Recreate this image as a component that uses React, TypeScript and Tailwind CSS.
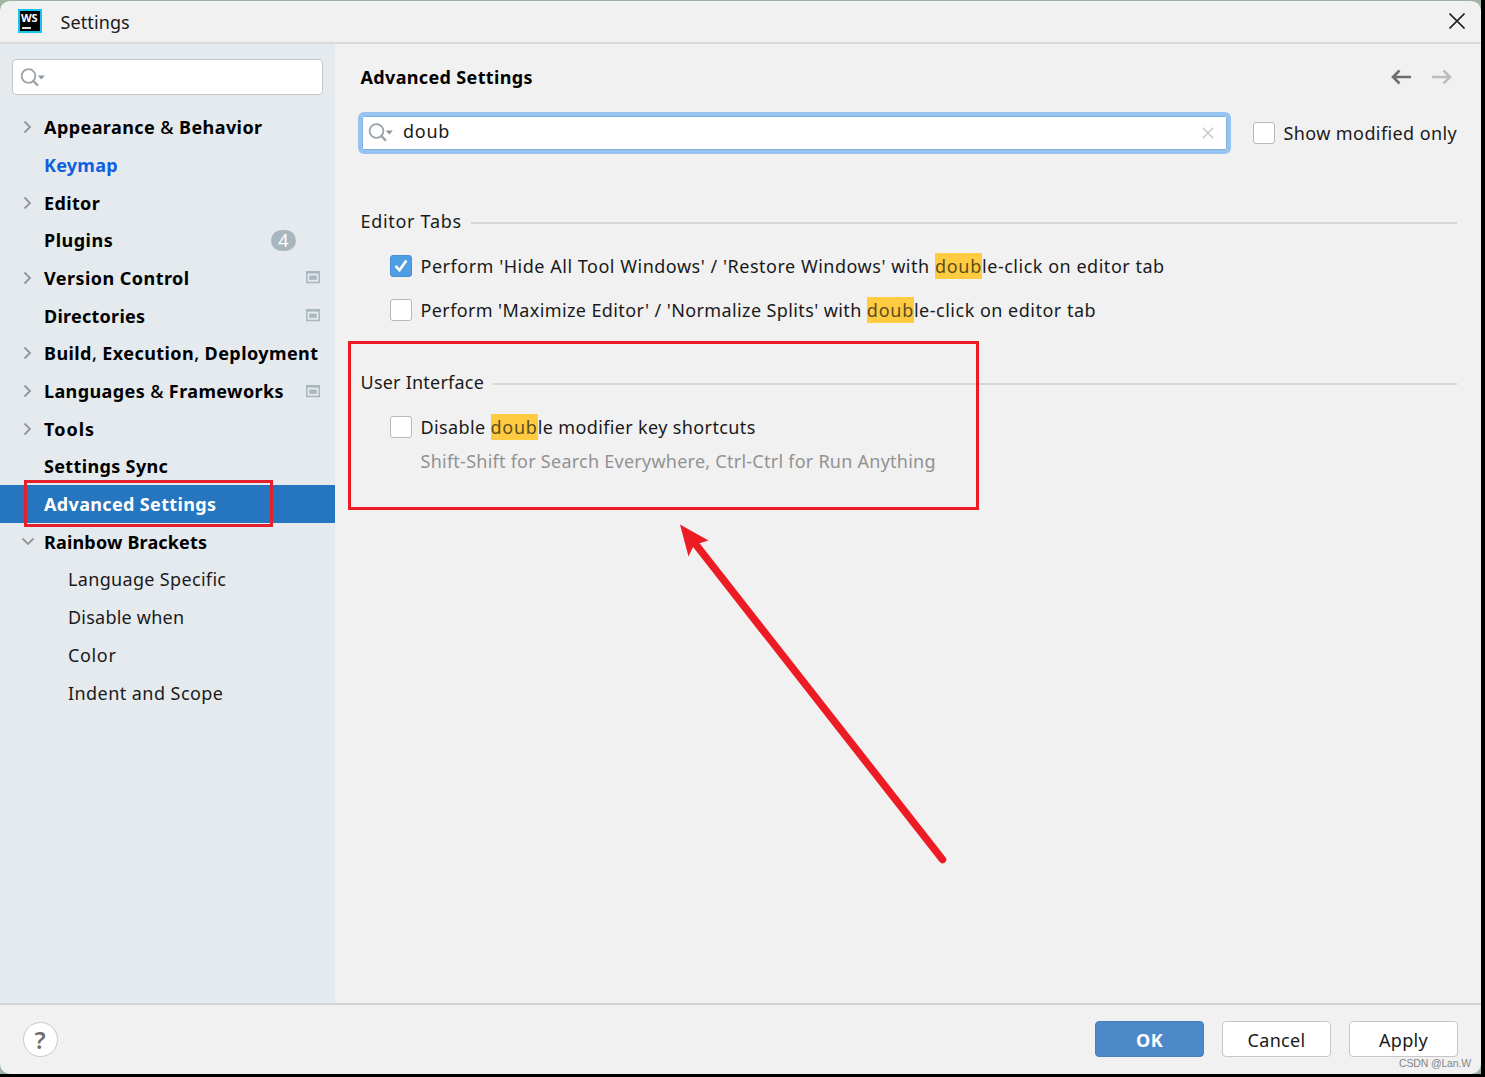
import { ReactNode } from "react";
import clsx from "clsx";

interface TreeItem {
  label: string;
  tracking: string;
  arrow?: "right" | "down";
  badge?: string;
  project?: boolean;
  link?: boolean;
  selected?: boolean;
  child?: boolean;
}

const items: TreeItem[] = [
  { label: "Appearance & Behavior", tracking: "tracking-[0.42px]", arrow: "right" },
  { label: "Keymap", tracking: "tracking-[0.25px]", link: true },
  { label: "Editor", tracking: "tracking-[0.35px]", arrow: "right" },
  { label: "Plugins", tracking: "tracking-[0.5px]", badge: "4" },
  { label: "Version Control", tracking: "tracking-[0.45px]", arrow: "right", project: true },
  { label: "Directories", tracking: "tracking-[0.25px]", project: true },
  { label: "Build, Execution, Deployment", tracking: "tracking-[0.42px]", arrow: "right" },
  { label: "Languages & Frameworks", tracking: "tracking-[0.39px]", arrow: "right", project: true },
  { label: "Tools", tracking: "tracking-[1px]", arrow: "right" },
  { label: "Settings Sync", tracking: "tracking-[0.35px]" },
  { label: "Advanced Settings", tracking: "tracking-[0.35px]", selected: true },
  { label: "Rainbow Brackets", tracking: "tracking-[0.17px]", arrow: "down" },
  { label: "Language Specific", tracking: "tracking-[0.33px]", child: true },
  { label: "Disable when", tracking: "tracking-[0.22px]", child: true },
  { label: "Color", tracking: "tracking-[0.65px]", child: true },
  { label: "Indent and Scope", tracking: "tracking-[0.44px]", child: true },
];

const Chevron = ({ direction }: { direction: "right" | "down" }) => (
  <svg
    viewBox="0 0 14 14"
    className={clsx("size-3.5", direction === "down" && "rotate-90")}
    fill="none"
    stroke="#929598"
    strokeWidth="1.8"
  >
    <path d="M3.5 1.5L9 7l-5.5 5.5" />
  </svg>
);

const SearchIcon = () => (
  <svg width="25" height="19" viewBox="0 0 25 19" fill="none" className="shrink-0">
    <circle cx="8.5" cy="8" r="6.9" stroke="#9aa3a9" strokeWidth="1.8" />
    <path d="M12.6 12.4l5.4 5.2" stroke="#9aa3a9" strokeWidth="2.3" />
    <path d="M17.8 7.5h7l-3.5 4z" fill="#8b959b" />
  </svg>
);

const ProjectIcon = () => (
  <svg width="14" height="13" viewBox="0 0 14 13" fill="none">
    <path d="M.8 1h12.4v10.6H.8z" stroke="#a9b6be" strokeWidth="1.5" />
    <path d="M0 0h14v2.6H0z" fill="#a9b6be" />
    <path d="M3.2 4.6h7.6v4.2H3.2z" fill="#a9b6be" />
  </svg>
);

const TreeRow = ({ item }: { item: TreeItem }) => (
  <div
    className={clsx(
      "flex h-[37.7px] items-center pl-[21px] pr-[15px]",
      item.selected && "bg-[#2675bf] text-white",
      item.link && "text-[#0f5fe0]",
      !item.selected && !item.link && "text-black"
    )}
  >
    <div className="w-[23px] shrink-0">{item.arrow && <Chevron direction={item.arrow} />}</div>
    <div
      className={clsx(
        "flex-1 whitespace-nowrap",
        item.child ? "pl-6 text-[#1a1a1a]" : "font-bold",
        item.tracking
      )}
    >
      {item.label.split(/([&,])/).map((part, index) =>
        /^[&,]$/.test(part) ? (
          <span key={index} className="font-medium">
            {part}
          </span>
        ) : (
          part
        )
      )}
    </div>
    {item.badge && (
      <div className="mr-[24px] flex h-[21px] w-[25px] items-center justify-center rounded-full bg-[#a9b6be] text-white">
        {item.badge}
      </div>
    )}
    {item.project && <ProjectIcon />}
  </div>
);

const Checkbox = ({ checked }: { checked?: boolean }) =>
  checked ? (
    <div className="flex size-[22px] shrink-0 items-center justify-center rounded-[3px] border border-[#4a90d6] bg-[#4f9ee3]">
      <svg width="16" height="16" viewBox="0 0 16 16" fill="none" stroke="#fff" strokeWidth="2.6">
        <path d="M2.5 8l4 4.2L13.4 2.5" />
      </svg>
    </div>
  ) : (
    <div className="size-[22px] shrink-0 rounded-[3px] border-[1.5px] border-[#b8b8b8] bg-white" />
  );

const Mark = () => (
  <span className="inline-block h-[26px] bg-[#ffcc41] leading-[26px] tracking-[0.75px] text-[#5c4d1f]">doub</span>
);

const SectionTitle = ({ tracking, children }: { tracking: string; children: ReactNode }) => (
  <div className="flex h-6 items-center gap-[9px]">
    <span className={clsx("whitespace-nowrap", tracking)}>{children}</span>
    <div className="mt-[3px] h-[2px] flex-1 bg-[#d6d6d6]" />
  </div>
);

interface OptionProps {
  checked?: boolean;
  tracking: string;
  children: ReactNode;
}

const Option = ({ checked, tracking, children }: OptionProps) => (
  <div className="flex h-[26px] items-center gap-[9px] pl-[29px]">
    <Checkbox checked={checked} />
    <div className={clsx("whitespace-nowrap", tracking)}>{children}</div>
  </div>
);

const Button = ({ primary, children }: { primary?: boolean; children: ReactNode }) => (
  <button
    className={clsx(
      "h-9 w-[109px] rounded-[4px] border-[1.5px] pt-px tracking-[0.3px]",
      primary ? "border-[#4480bf] bg-[#4d89c9] font-bold text-white" : "border-[#c6c6c6] bg-white"
    )}
  >
    {children}
  </button>
);

const Sidebar = () => (
  <div className="w-[335px] shrink-0 bg-[#e5eaee] pt-[15px]">
    <div className="ml-3 flex h-9 w-[311px] items-center rounded-[4px] border-[1.5px] border-[#c4c6c8] bg-white pl-[7px]">
      <SearchIcon />
    </div>
    <div className="pt-[13.4px]">
      {items.map((item) => (
        <TreeRow key={item.label} item={item} />
      ))}
    </div>
  </div>
);

const Content = () => (
  <div className="flex-1 pl-[25.5px] pr-[25px]">
    <div className="flex h-[66px] items-center justify-between">
      <h1 className="whitespace-nowrap font-bold tracking-[0.35px] text-black">Advanced Settings</h1>
      <div className="mr-[5.5px] flex gap-[21px]">
        {["#6e6e6e", "#bdbdbd"].map((color, index) => (
          <svg
            key={color}
            width="20"
            height="16"
            viewBox="0 0 20 16"
            fill="none"
            stroke={color}
            strokeWidth="2.6"
            className={clsx(index === 1 && "-scale-x-100")}
          >
            <path d="M20 8H2M8.5 1.5L2 8l6.5 6.5" />
          </svg>
        ))}
      </div>
    </div>
    <div className="-ml-[2.5px] flex h-[46px] items-center">
      <div className="-mt-px flex h-[42px] w-[873px] shrink-0 items-center rounded-[6px] border-4 border-[#97c3f0] bg-white pl-[6px] pr-[13px] ring-1 ring-inset ring-[#7fb0e4]">
        <SearchIcon />
        <span className="-mt-[3px] ml-[10px] flex-1 tracking-[0.75px]">doub</span>
        <svg width="12" height="12" viewBox="0 0 12 12" stroke="#c3c8cb" strokeWidth="1.5">
          <path d="M.7.7l10.6 10.6M11.3.7L.7 11.3" />
        </svg>
      </div>
      <div className="ml-[22px] flex items-center gap-[8.5px]">
        <Checkbox />
        <span className="whitespace-nowrap tracking-[0.4px]">Show modified only</span>
      </div>
    </div>
    <div className="pt-[53px]">
      <SectionTitle tracking="tracking-[0.7px]">Editor Tabs</SectionTitle>
      <div className="flex flex-col gap-[18px] pt-5">
        <Option checked tracking="tracking-[0.52px]">
          Perform 'Hide All Tool Windows' / 'Restore Windows' with <Mark />
          le-click on editor tab
        </Option>
        <Option tracking="tracking-[0.5px]">
          <span className="tracking-[0.39px]">Perform 'Maximize Editor' / 'Normalize Splits' with </span>
          <Mark />
          le-click on editor tab
        </Option>
      </div>
    </div>
    <div className="pt-[47px]">
      <SectionTitle tracking="tracking-[0.22px]">User Interface</SectionTitle>
      <div className="pt-5">
        <Option tracking="tracking-[0.37px]">
          Disable <Mark />
          le modifier key shortcuts
        </Option>
      </div>
      <div className="whitespace-nowrap pl-[60px] pt-[9px] tracking-[0.25px] text-[#929292]">
        Shift-Shift for Search Everywhere, Ctrl-Ctrl for Run Anything
      </div>
    </div>
  </div>
);

// Red boxes and arrow drawn on top of the dialog
const Annotations = () => (
  <>
    <div className="absolute left-[24px] top-[480px] h-[47px] w-[249px] border-[3px] border-[#e3202b]" />
    <div className="absolute left-[348px] top-[341px] h-[169px] w-[631px] border-[3px] border-[#ed1c24]" />
    <svg className="absolute left-[670px] top-[515px]" width="290" height="360" viewBox="670 515 290 360">
      <path d="M697 546L942.5 859.5" stroke="#ed1c24" strokeWidth="7.5" strokeLinecap="round" />
      <path d="M680 524.5L708.5 540.5 697 544 692.5 548 688.5 556.5z" fill="#ed1c24" />
    </svg>
  </>
);

export default function App() {
  return (
    <div className="relative h-[1077px] w-[1485px] overflow-hidden bg-black font-['Noto_Sans','Open_Sans',sans-serif] text-[18px] leading-6 text-[#1a1a1a]">
      <div className="h-[1074px] w-[1481px] bg-[#9eb5a1]">
        <div className="flex h-full flex-col overflow-hidden rounded-[10px] border-t border-[#9eb09f] bg-[#f1f1f1]">
          <div className="flex h-[43px] shrink-0 items-center border-b-2 border-[#dadada] pl-[18px] pr-4">
            <div className="-mt-px flex size-6 flex-col border-2 border-[#16c5ec] bg-black pl-px">
              <span className="font-['Open_Sans',sans-serif] text-[11px] font-bold leading-[13px] tracking-[-0.2px] text-white">
                WS
              </span>
              <div className="ml-px mt-[3px] h-[2px] w-[9px] bg-[#e0e0e0]" />
            </div>
            <span className="ml-[18.5px] flex-1 tracking-[0.1px]">Settings</span>
            <svg className="-mt-px" width="16" height="16" viewBox="0 0 16 16" stroke="#222" strokeWidth="1.6">
              <path d="M.5.5l15 15M15.5.5l-15 15" />
            </svg>
          </div>
          <div className="flex min-h-0 flex-1">
            <Sidebar />
            <Content />
          </div>
          <div className="flex h-[71px] shrink-0 items-center border-t-2 border-[#d3d3d3] pl-[22.5px] pr-[23px]">
            <div className="flex size-[35px] items-center justify-center rounded-full border-[1.5px] border-[#c8c8c8] bg-white text-[24px] font-semibold text-[#6e6e6e]">
              ?
            </div>
            <div className="-mt-px ml-auto flex gap-[18px]">
              <Button primary>OK</Button>
              <Button>Cancel</Button>
              <Button>Apply</Button>
            </div>
          </div>
        </div>
      </div>
      <Annotations />
      <div className="absolute left-[1399px] top-[1056px] whitespace-nowrap font-['Liberation_Sans',sans-serif] text-[10.5px] leading-[14px] tracking-[-0.15px] text-[#858585]">
        CSDN @Lan.W
      </div>
    </div>
  );
}
